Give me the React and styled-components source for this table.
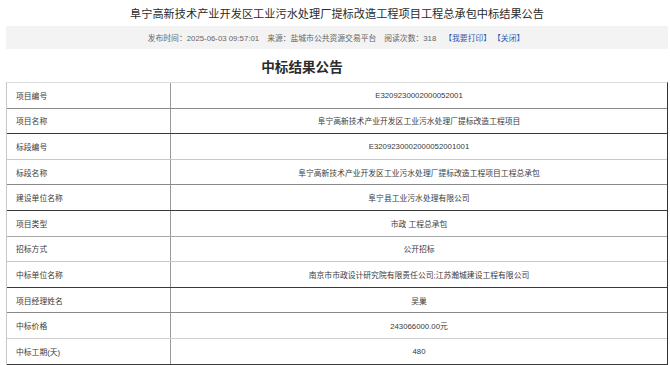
import React from "react"
import styled, { createGlobalStyle } from "styled-components"

const Global = createGlobalStyle`
body {
    margin: 0;
    background: #fff;
    font-family: "Liberation Sans", "Noto Sans CJK SC", sans-serif;
    color: #333;
}
`

const Page = styled.div`
width: 662px;
padding-left: 6px;
`

const Title = styled.h1`
margin: 0;
height: 26px;
line-height: 28px;
font-size: 11.2px;
font-weight: normal;
text-align: center;
color: #2a2a2a;
`

const Meta = styled.div`
display: flex;
justify-content: center;
align-items: center;
height: 23px;
background: #f3f3f3;
font-size: 7.8px;
color: #666;
span {
    margin-right: 8px;
}
`

const MetaLink = styled.a`
color: #2b5fb4;
text-decoration: none;
margin-right: 2px;
`

const SubTitle = styled.h2`
margin: 12px 0 7px;
padding-right: 70px;
line-height: 14px;
font-size: 13.6px;
font-weight: bold;
text-align: center;
color: #2b2b2b;
`

const Table = styled.div`
border-top: 1px solid #dcdcdc;
border-left: 1px solid #c8c8c8;
border-right: 1px solid #333;
font-size: 7.8px;
color: #3a3a3a;
`

const Row = styled.div`
display: flex;
align-items: stretch;
height: 25.6px;
box-sizing: border-box;
border-bottom: 1px solid ${p => p.line};
`

const Label = styled.div`
width: 164px;
flex-shrink: 0;
box-sizing: border-box;
padding-left: 9px;
display: flex;
align-items: center;
border-right: 1px solid #9a9a9a;
`

const Value = styled.div`
flex: 1;
display: flex;
align-items: center;
justify-content: center;
`

const rows = [
    ["项目编号", "E3209230002000052001", "#8a8a8a"],
    ["项目名称", "阜宁高新技术产业开发区工业污水处理厂提标改造工程项目", "#3a3a3a"],
    ["标段编号", "E3209230002000052001001", "#c8c8c8"],
    ["标段名称", "阜宁高新技术产业开发区工业污水处理厂提标改造工程项目工程总承包", "#8a8a8a"],
    ["建设单位名称", "阜宁县工业污水处理有限公司", "#3a3a3a"],
    ["项目类型", "市政 工程总承包", "#a8a8a8"],
    ["招标方式", "公开招标", "#c8c8c8"],
    ["中标单位名称", "南京市市政设计研究院有限责任公司;江苏瀚城建设工程有限公司", "#3a3a3a"],
    ["项目经理姓名", "吴巢", "#8a8a8a"],
    ["中标价格", "243066000.00元", "#d0d0d0"],
    ["中标工期(天)", "480", "#3a3a3a"],
]

export default function App() {
    return <Page>
        <Global />
        <Title>阜宁高新技术产业开发区工业污水处理厂提标改造工程项目工程总承包中标结果公告</Title>
        <Meta>
            <span>发布时间：2025-06-03 09:57:01</span>
            <span>来源：盐城市公共资源交易平台</span>
            <span>阅读次数：318</span>
            <MetaLink href="#">【我要打印】</MetaLink>
            <MetaLink href="#">【关闭】</MetaLink>
        </Meta>
        <SubTitle>中标结果公告</SubTitle>
        <Table>
            {rows.map(([k, v, line]) => (
                <Row key={k} line={line}>
                    <Label>{k}</Label>
                    <Value>{v}</Value>
                </Row>
            ))}
        </Table>
    </Page>
}
